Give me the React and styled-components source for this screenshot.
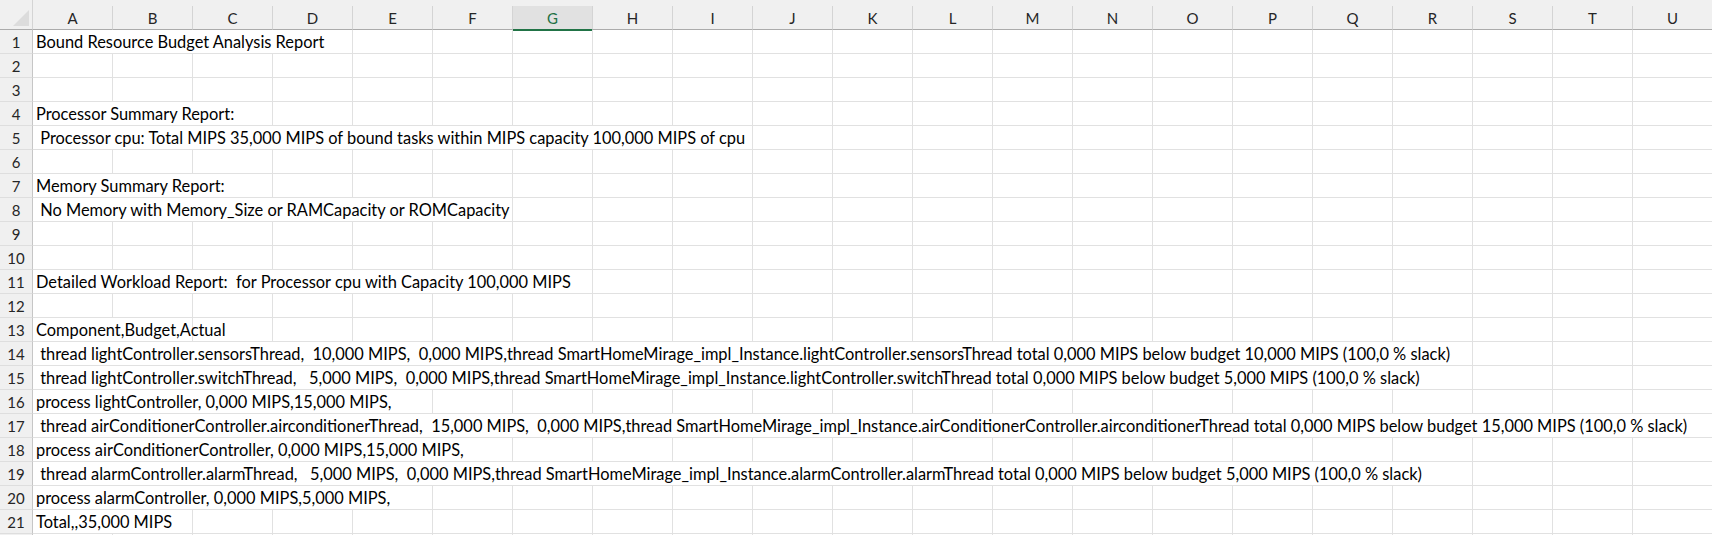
import React from "react"
import styled, { createGlobalStyle, css } from "styled-components"

const COLS = "ABCDEFGHIJKLMNOPQRSTU".split("")
const SELECTED_COL = "G"
const FONT = `"Lato", "Liberation Sans", sans-serif`

const GlobalStyle = createGlobalStyle`
  html, body {
    margin: 0;
    padding: 0;
    background: #ffffff;
    overflow: hidden;
  }
`

const Sheet = styled.div`
  width: 1712px;
  height: 535px;
  overflow: hidden;
  font-family: ${FONT};
  color: #000;
`

const HeaderRow = styled.div`
  display: grid;
  grid-template-columns: 33px repeat(21, 80px);
  height: 30px;
  background: #f0f0f0;
`

const Corner = styled.div`
  position: relative;
  border-right: 1px solid #d4d4d4;
  border-bottom: 1px solid #ababab;
  box-sizing: border-box;

  &::after {
    content: "";
    position: absolute;
    left: 13px;
    top: 10px;
    width: 0;
    height: 0;
    border-style: solid;
    border-width: 0 0 16px 16px;
    border-color: transparent transparent #dcdcdc transparent;
  }
`

const ColHeader = styled.div`
  margin-top: 6px;
  display: flex;
  align-items: center;
  justify-content: center;
  box-sizing: border-box;
  border-right: 1px solid #d4d4d4;
  border-bottom: 1px solid #ababab;
  font-size: 15px;
  color: #262626;

  ${(p) =>
    p.$selected &&
    css`
      background: #e1e1e1;
      color: #1e7145;
      border-bottom: 2px solid #217346;
      margin-bottom: -1px;
    `}
`

const Row = styled.div`
  display: grid;
  grid-template-columns: 33px repeat(21, 80px);
  height: 24px;
`

const RowHeader = styled.div`
  background: #f0f0f0;
  border-right: 1px solid #c6c6c6;
  border-bottom: 1px solid #dedede;
  box-sizing: border-box;
  display: flex;
  align-items: center;
  justify-content: center;
  font-size: 15px;
  color: #262626;
  padding-top: 1px;
`

const Cell = styled.div`
  grid-column: span ${(p) => p.$span || 1};
  border-right: 1px solid #e1e1e1;
  border-bottom: 1px solid #e1e1e1;
  box-sizing: border-box;
  padding-left: 3px;
  white-space: pre;
  overflow: visible;
  font-size: 16.4px;
  line-height: 23px;
`

// [text, number of columns the text runs over]
const rows = [
  ["Bound Resource Budget Analysis Report", 4],
  [null, 0],
  [null, 0],
  ["Processor Summary Report:", 3],
  [" Processor cpu: Total MIPS 35,000 MIPS of bound tasks within MIPS capacity 100,000 MIPS of cpu", 9],
  [null, 0],
  ["Memory Summary Report:", 3],
  [" No Memory with Memory_Size or RAMCapacity or ROMCapacity", 6],
  [null, 0],
  [null, 0],
  ["Detailed Workload Report:  for Processor cpu with Capacity 100,000 MIPS", 7],
  [null, 0],
  ["Component,Budget,Actual", 2],
  [" thread lightController.sensorsThread,  10,000 MIPS,  0,000 MIPS,thread SmartHomeMirage_impl_Instance.lightController.sensorsThread total 0,000 MIPS below budget 10,000 MIPS (100,0 % slack)", 18],
  [" thread lightController.switchThread,   5,000 MIPS,  0,000 MIPS,thread SmartHomeMirage_impl_Instance.lightController.switchThread total 0,000 MIPS below budget 5,000 MIPS (100,0 % slack)", 18],
  ["process lightController, 0,000 MIPS,15,000 MIPS,", 5],
  [" thread airConditionerController.airconditionerThread,  15,000 MIPS,  0,000 MIPS,thread SmartHomeMirage_impl_Instance.airConditionerController.airconditionerThread total 0,000 MIPS below budget 15,000 MIPS (100,0 % slack)", 21],
  ["process airConditionerController, 0,000 MIPS,15,000 MIPS,", 6],
  [" thread alarmController.alarmThread,   5,000 MIPS,  0,000 MIPS,thread SmartHomeMirage_impl_Instance.alarmController.alarmThread total 0,000 MIPS below budget 5,000 MIPS (100,0 % slack)", 18],
  ["process alarmController, 0,000 MIPS,5,000 MIPS,", 5],
  ["Total,,35,000 MIPS", 2],
  [null, 0],
]

function SheetRow({ index, text, span }) {
  const empties = 21 - (text ? span : 0)
  return (
    <Row>
      <RowHeader>{index <= 21 ? index : ""}</RowHeader>
      {text && <Cell $span={span}>{text}</Cell>}
      {Array.from({ length: empties }).map((_, i) => (
        <Cell key={i} />
      ))}
    </Row>
  )
}

export default function App() {
  return (
    <>
      <GlobalStyle />
      <Sheet>
        <HeaderRow>
          <Corner />
          {COLS.map((c) => (
            <ColHeader key={c} $selected={c === SELECTED_COL}>
              {c}
            </ColHeader>
          ))}
        </HeaderRow>
        {rows.map(([text, span], i) => (
          <SheetRow key={i} index={i + 1} text={text} span={span} />
        ))}
      </Sheet>
    </>
  )
}
